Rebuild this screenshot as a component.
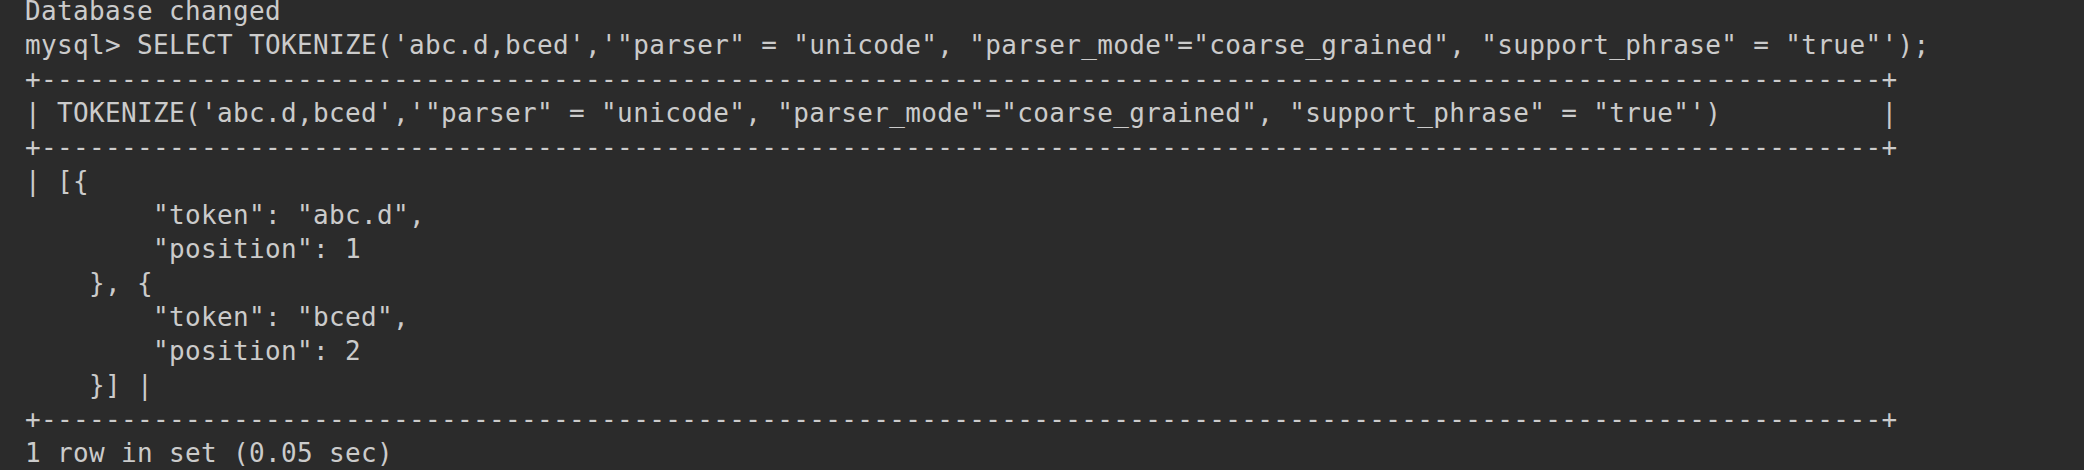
const border = "+" + "-".repeat(115) + "+";
const query =
  `TOKENIZE('abc.d,bced','"parser" = "unicode", "parser_mode"="coarse_grained", "support_phrase" = "true"')`;

const lines = [
  "Database changed",
  `mysql> SELECT ${query};`,
  border,
  `| ${query}${" ".repeat(9)} |`,
  border,
  "| [{",
  `        "token": "abc.d",`,
  `        "position": 1`,
  "    }, {",
  `        "token": "bced",`,
  `        "position": 2`,
  "    }] |",
  border,
  "1 row in set (0.05 sec)",
];

export default function App() {
  return (
    <div className="h-[470px] w-full overflow-hidden bg-[#2b2b2b]">
      <pre className="-mt-[6px] pl-[25px] font-['DejaVu_Sans_Mono',monospace] text-[26px] leading-[34px] tracking-[0.35px] text-[#cbcbcb]">
        {lines.join("\n")}
      </pre>
    </div>
  );
}
